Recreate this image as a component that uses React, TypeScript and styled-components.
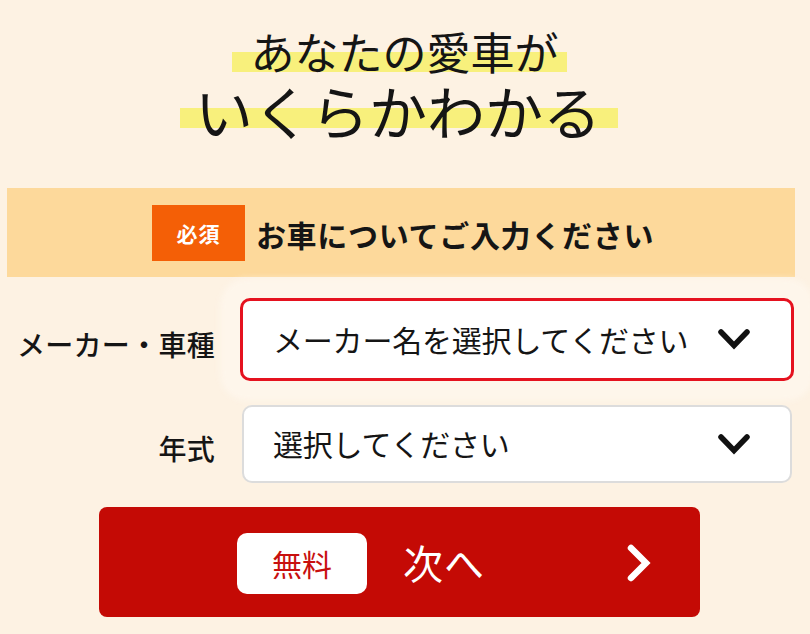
import { createGlobalStyle, styled } from 'styled-components'

const GlobalStyle = createGlobalStyle`
  html, body {
    margin: 0;
    padding: 0;
    background: #fdf2e3;
  }
  body {
    font-family: "Noto Sans CJK JP", "Noto Sans", sans-serif;
    color: #151515;
  }
`

const Page = styled.main`
  width: 810px;
  height: 634px;
  padding-top: 26px;
  box-sizing: border-box;
  display: flex;
  flex-direction: column;
  overflow: hidden;
`

const Title = styled.h1`
  margin: 0 12px 0 0;
  display: flex;
  flex-direction: column;
  align-items: center;
  gap: 4px;
  font-weight: 400;
`

const Marker = styled.span<{ $size: number; $line: number; $from: number; $to: number; $pl: number; $pr: number }>`
  display: inline-block;
  font-size: ${(p) => p.$size}px;
  line-height: ${(p) => p.$line}px;
  padding: 0 ${(p) => p.$pr}px 0 ${(p) => p.$pl}px;
  background: linear-gradient(
    to bottom,
    transparent ${(p) => p.$from}%,
    #f8f07c ${(p) => p.$from}%,
    #f8f07c ${(p) => p.$to}%,
    transparent ${(p) => p.$to}%
  );
`

const Band = styled.div`
  margin: 48px 15px 0 7px;
  height: 89px;
  background: #fdd99b;
  display: flex;
  align-items: center;
  justify-content: center;
  gap: 11px;
  padding-left: 4px;
`

const Badge = styled.span`
  width: 93px;
  height: 56px;
  background: #f45f06;
  color: #fff;
  font-size: 21px;
  font-weight: 700;
  display: flex;
  align-items: center;
  justify-content: center;
  letter-spacing: 1px;
`

const BandText = styled.span`
  font-size: 30px;
  font-weight: 700;
  letter-spacing: 0.7px;
  margin-top: 2px;
`

const Form = styled.div`
  margin-top: 21px;
  display: grid;
  grid-template-columns: 215px 1fr;
  column-gap: 25px;
  row-gap: 24px;
  padding-right: 16px;
  align-items: center;
`

const Label = styled.label`
  text-align: right;
  font-size: 28px;
  font-weight: 500;
  letter-spacing: 0.3px;
  padding-top: 8px;
`

const Select = styled.div<{ $active?: boolean }>`
  height: ${(p) => (p.$active ? 83 : 78)}px;
  margin: 0 ${(p) => (p.$active ? 0 : 2)}px;
  box-sizing: border-box;
  background: #fff;
  border: ${(p) => (p.$active ? '3px solid #e5121f' : '2px solid #dcdcdc')};
  border-radius: 10px;
  display: flex;
  align-items: center;
  padding: 0 ${(p) => (p.$active ? 41 : 40)}px 0 ${(p) => (p.$active ? 30 : 29)}px;
  font-size: 30px;
  font-weight: 400;
  letter-spacing: -0.2px;
  box-shadow: ${(p) => (p.$active ? '0 0 6px 20px rgba(255, 250, 242, 0.55)' : 'none')};
`

const SelectText = styled.span`
  flex: 1;
  margin-top: -2px;
`

const NextButton = styled.button`
  margin: 24px 0 0 99px;
  width: 601px;
  height: 110px;
  border: none;
  border-radius: 8px;
  background: #c40a05;
  display: flex;
  align-items: center;
  padding: 0 48px 0 138px;
  box-sizing: border-box;
  font-family: inherit;
  cursor: pointer;
`

const FreePill = styled.span`
  width: 130px;
  height: 61px;
  border-radius: 10px;
  background: #fff;
  color: #c8100e;
  font-size: 30px;
  font-weight: 400;
  display: flex;
  align-items: center;
  justify-content: center;
  margin-top: 2px;
`

const NextText = styled.span`
  margin-left: 36px;
  color: #fff;
  font-size: 40px;
  font-weight: 400;
  letter-spacing: 1px;
`

const NextArrow = styled.svg`
  margin-left: auto;
  margin-top: 2px;
`

function Chevron() {
  return (
    <svg width="32" height="21" viewBox="0 0 32 21">
      <polyline points="3,3 16,16.5 29,3" fill="none" stroke="#111" strokeWidth="5.5" strokeLinecap="round" strokeLinejoin="miter" />
    </svg>
  )
}

export default function App() {
  return (
    <Page>
      <GlobalStyle />
      <Title>
        <Marker $size={44} $line={50} $from={52} $to={92} $pl={19} $pr={8}>あなたの愛車が</Marker>
        <Marker $size={58} $line={60} $from={47} $to={80} $pl={15} $pr={17}>いくらかわかる</Marker>
      </Title>
      <Band>
        <Badge>必須</Badge>
        <BandText>お車についてご入力ください</BandText>
      </Band>
      <Form>
        <Label>メーカー・車種</Label>
        <Select $active>
          <SelectText>メーカー名を選択してください</SelectText>
          <Chevron />
        </Select>
        <Label>年式</Label>
        <Select>
          <SelectText>選択してください</SelectText>
          <Chevron />
        </Select>
      </Form>
      <NextButton>
        <FreePill>無料</FreePill>
        <NextText>次へ</NextText>
        <NextArrow width="26" height="38" viewBox="0 0 26 38">
          <polyline points="5,4 20,19 5,34" fill="none" stroke="#fff" strokeWidth="6.5" strokeLinecap="round" strokeLinejoin="miter" />
        </NextArrow>
      </NextButton>
    </Page>
  )
}
